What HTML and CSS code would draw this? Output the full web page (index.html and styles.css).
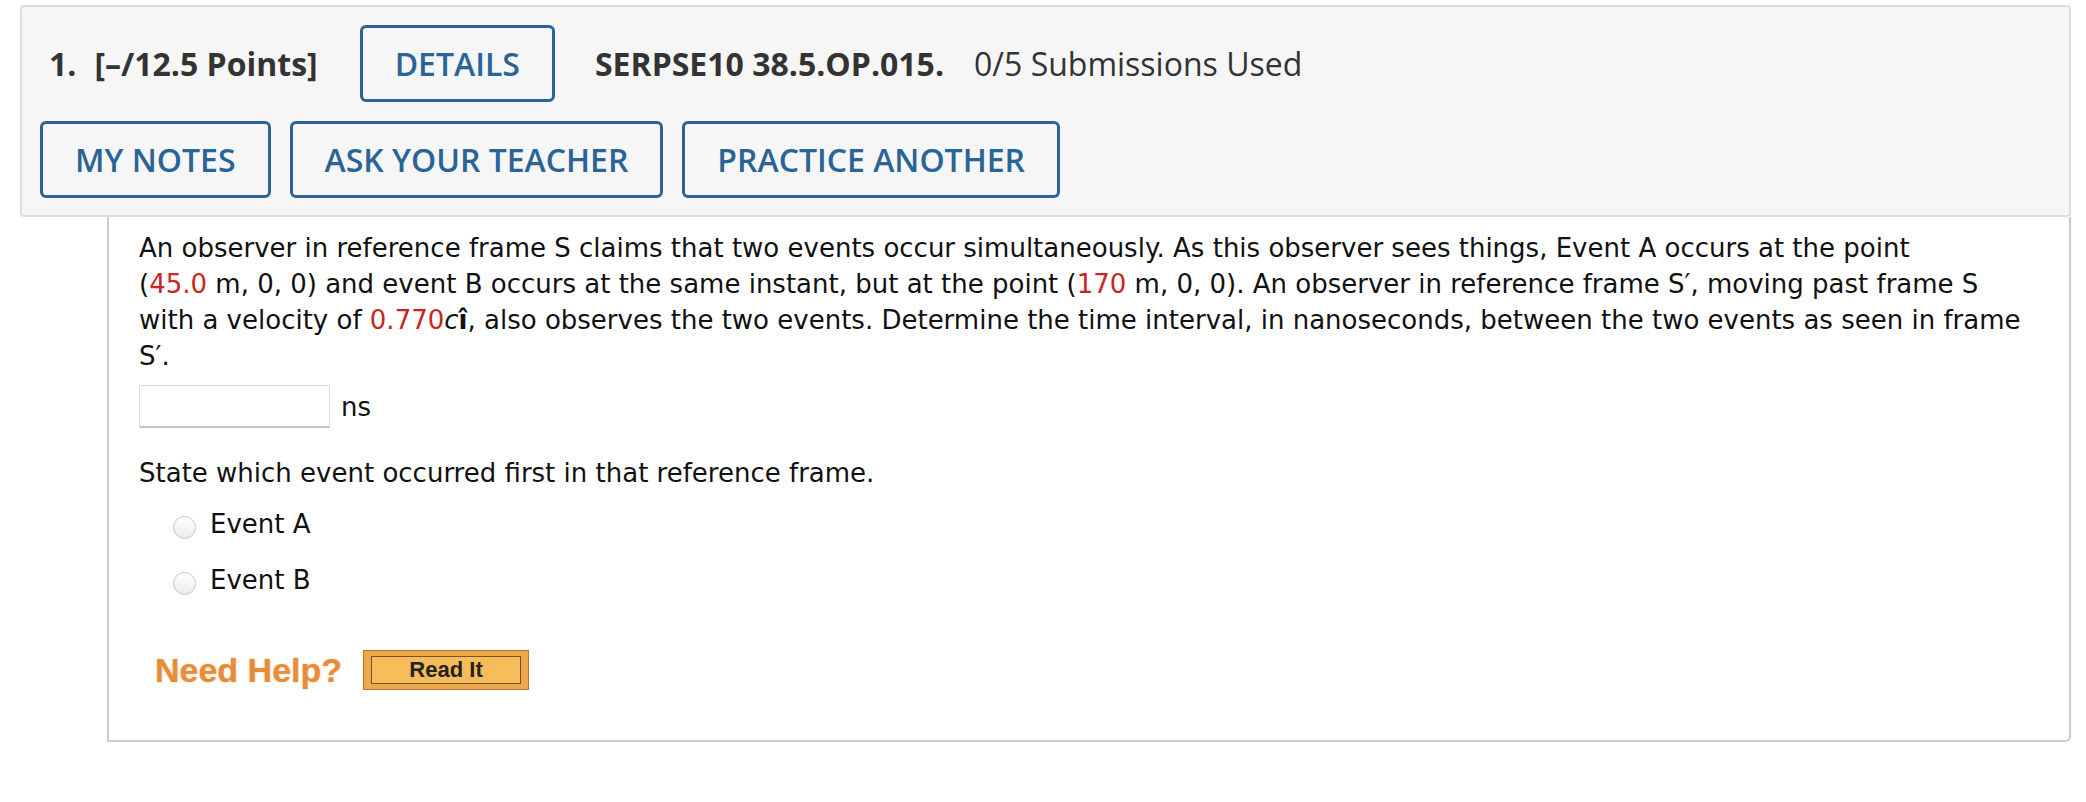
FILE: index.html
```html
<!DOCTYPE html>
<html lang="en">
  <head>
    <meta charset="UTF-8" />
    <meta name="viewport" content="width=device-width, initial-scale=1.0" />
    <title>SERPSE10 38.5.OP.015.</title>
    <link rel="stylesheet" href="styles.css">
  </head>
  <body>
    <div class="question">
      <div class="header">
        <div class="row">
          <span class="qnum">1.</span>
          <span class="points">[–/12.5 Points]</span>
          <button class="button">DETAILS</button>
          <span class="code">SERPSE10 38.5.OP.015.</span>
          <span class="subs">0/5 Submissions Used</span>
        </div>
        <div class="row row-actions">
          <button class="button">MY NOTES</button>
          <button class="button">ASK YOUR TEACHER</button>
          <button class="button">PRACTICE ANOTHER</button>
        </div>
      </div>
      <div class="content">
        <p class="prompt">
          An observer in reference frame S claims that two events occur simultaneously. As this observer sees things, Event A occurs at the point
          (<span class="val">45.0</span>&nbsp;m,&nbsp;0,&nbsp;0) and event B occurs at the same instant, but at the point
          (<span class="val">170</span>&nbsp;m,&nbsp;0,&nbsp;0). An observer in reference frame S′, moving past frame S
          with a velocity of <span class="val">0.770</span><i>c</i><b>î</b>, also observes the two events. Determine the time interval, in nanoseconds, between the two events as seen in frame S′.
        </p>
        <div class="answer">
          <input class="answer-input" type="text" />
          <span>ns</span>
        </div>
        <p class="prompt prompt-second">State which event occurred first in that reference frame.</p>
        <ul class="choices">
          <li><label><input type="radio" name="first" /> Event A</label></li>
          <li><label><input type="radio" name="first" /> Event B</label></li>
        </ul>
        <div class="help">
          <span class="need-help">Need Help?</span>
          <span class="read-it"><span class="read-it-inner">Read It</span></span>
        </div>
      </div>
    </div>
  </body>
</html>
```

FILE: styles.css
```css
* {
  margin: 0;
  padding: 0;
  box-sizing: border-box;
}
html,
body {
  background: #ffffff;
}
body {
  padding: 5px 15px 0 20px;
  font-family: "DejaVu Sans", Verdana, sans-serif;
  color: #111111;
}
/* header bar */
.header {
  background: #f6f6f6;
  border: 2px solid #dddddd;
  border-radius: 4px;
  padding: 18px 16px 17px 18px;
  font-family: "Open Sans", sans-serif;
  font-size: 32px;
  color: #333333;
}
.row {
  display: flex;
  align-items: center;
}
.row-actions {
  margin-top: 19px;
  gap: 19px;
}
.qnum {
  font-weight: 700;
  margin-left: 9px;
  margin-right: 18px;
}
.points {
  font-weight: 700;
  margin-right: 42px;
}
.code {
  font-weight: 700;
  margin-left: 40px;
  margin-right: 30px;
}
.button {
  font-family: "Open Sans", sans-serif;
  font-size: 32px;
  font-weight: 600;
  color: #2a6496;
  background: transparent;
  border: 3px solid #2a6496;
  border-radius: 6px;
  padding: 0 32px;
  height: 77px;
  line-height: 71px;
  cursor: pointer;
}
/* question body */
.content {
  margin-left: 87px;
  background: #ffffff;
  border: 2px solid #cccccc;
  border-top: none;
  border-bottom-right-radius: 6px;
  padding: 13px 34px 50px 30px;
  font-size: 26px;
  line-height: 36px;
}
.val {
  color: #c8261e;
}
.answer {
  display: flex;
  align-items: center;
  gap: 11px;
  margin-top: 11px;
}
.answer-input {
  width: 191px;
  height: 43px;
  border: 1px solid #dedede;
  border-bottom: 2px solid #c4c4c4;
  background: #ffffff;
  outline: none;
  font-size: 26px;
}
.prompt-second {
  margin-top: 27px;
}
.choices {
  list-style: none;
  margin-top: 15px;
  padding-left: 34px;
}
.choices li + li {
  margin-top: 20px;
}
.choices label {
  display: flex;
  align-items: flex-start;
  gap: 14px;
}
.choices input {
  appearance: none;
  width: 23px;
  height: 23px;
  margin-top: 10px;
  border: 1px solid #c6c6c6;
  border-radius: 50%;
  background: linear-gradient(#ffffff, #ececec);
}
/* help links */
.help {
  display: flex;
  align-items: center;
  gap: 21px;
  margin-top: 52px;
  margin-left: 16px;
}
.need-help {
  font-family: "Liberation Sans", Arial, sans-serif;
  font-size: 34px;
  font-weight: 700;
  line-height: 38px;
  color: #e68d3a;
  text-shadow: 0 0 2px rgba(230, 141, 58, 0.6);
}
.read-it {
  display: block;
  width: 166px;
  height: 40px;
  padding: 5px 7px;
  border: 1px solid #b8742a;
  background: #eba84c;
}
.read-it-inner {
  display: block;
  height: 28px;
  border: 1px solid #7a5424;
  background: #f5bc59;
  font-family: "Liberation Sans", Arial, sans-serif;
  font-size: 22px;
  font-weight: 700;
  line-height: 26px;
  text-align: center;
  color: #222222;
}
```
